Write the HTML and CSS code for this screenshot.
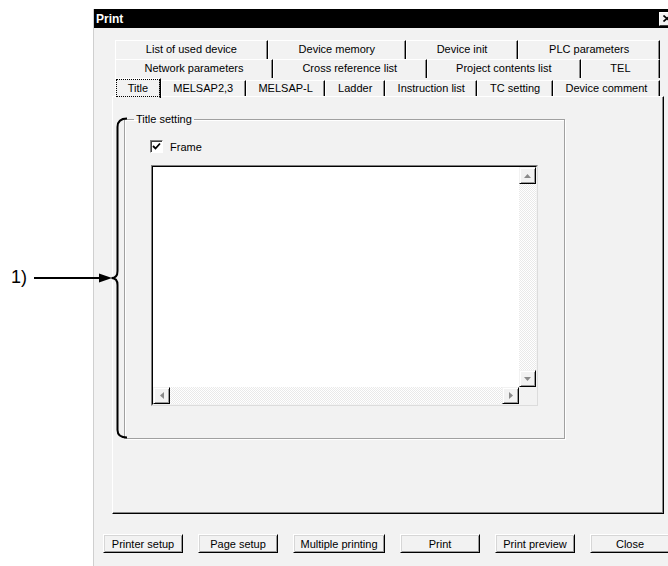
FILE: index.html
```html
<!DOCTYPE html>
<html lang="en">

<head>
    <meta charset="UTF-8">
    <title>Print</title>
    <link rel="stylesheet" href="styles.css">
</head>

<body>
<div class="sheet">
    <div class="callout">
        <span class="callout-label">1)</span>
        <svg class="callout-mark" width="140" height="566" viewBox="0 0 140 566">
            <line x1="34" y1="278" x2="102" y2="278" stroke="#000" stroke-width="2"/>
            <polygon points="99,273.5 112,278 99,282.5" fill="#000"/>
            <path d="M127 118.5 Q117.5 118.5 117.5 127 L117.5 271 Q117.5 278 111.5 278 Q117.5 278 117.5 285 L117.5 430 Q117.5 437.5 127 437.5"
                  fill="none" stroke="#000" stroke-width="2"/>
        </svg>
    </div>

    <div class="dialog">
        <div class="titlebar">
            <span class="title">Print</span>
            <span class="close-btn">
                <svg width="8" height="7" viewBox="0 0 8 7">
                    <path d="M0.5 0.5 L7.5 6.5 M7.5 0.5 L0.5 6.5" stroke="#000" stroke-width="1.6"/>
                </svg>
            </span>
        </div>

        <div class="tabctl">
            <div class="tab-row">
                <span class="tab">List of used device</span>
                <span class="tab">Device memory</span>
                <span class="tab">Device init</span>
                <span class="tab">PLC parameters</span>
            </div>
            <div class="tab-row">
                <span class="tab">Network parameters</span>
                <span class="tab">Cross reference list</span>
                <span class="tab">Project contents list</span>
                <span class="tab">TEL</span>
            </div>
            <div class="tab-row front">
                <span class="tab selected">Title</span>
                <span class="tab">MELSAP2,3</span>
                <span class="tab">MELSAP-L</span>
                <span class="tab">Ladder</span>
                <span class="tab">Instruction list</span>
                <span class="tab">TC setting</span>
                <span class="tab">Device comment</span>
            </div>

            <div class="tab-page">
                <fieldset class="group">
                    <legend>Title setting</legend>
                    <label class="check">
                        <span class="check-box">
                            <svg width="9" height="9" viewBox="0 0 9 9">
                                <path d="M1 4 L3.5 6.5 L8 1.5" fill="none" stroke="#000" stroke-width="1.8"/>
                            </svg>
                        </span>
                        Frame
                    </label>
                    <div class="editbox">
                        <div class="edit-inner">
                            <div class="edit-area"></div>
                            <div class="vscroll">
                                <span class="sbtn">
                                    <svg width="7" height="4" viewBox="0 0 7 4"><polygon points="3.5,0 7,4 0,4" fill="#8a8a8a"/></svg>
                                </span>
                                <span class="track"></span>
                                <span class="sbtn">
                                    <svg width="7" height="4" viewBox="0 0 7 4"><polygon points="0,0 7,0 3.5,4" fill="#8a8a8a"/></svg>
                                </span>
                            </div>
                            <div class="hscroll">
                                <span class="sbtn">
                                    <svg width="4" height="7" viewBox="0 0 4 7"><polygon points="4,0 4,7 0,3.5" fill="#8a8a8a"/></svg>
                                </span>
                                <span class="track"></span>
                                <span class="sbtn">
                                    <svg width="4" height="7" viewBox="0 0 4 7"><polygon points="0,0 4,3.5 0,7" fill="#8a8a8a"/></svg>
                                </span>
                            </div>
                            <div class="corner"></div>
                        </div>
                    </div>
                </fieldset>
            </div>
        </div>

        <div class="buttons">
            <button class="btn">Printer setup</button>
            <button class="btn">Page setup</button>
            <button class="btn btn-wide">Multiple printing</button>
            <button class="btn">Print</button>
            <button class="btn">Print preview</button>
            <button class="btn">Close</button>
        </div>
    </div>
</div>
</body>

</html>
```

FILE: styles.css
```css
body {
    font-family: 'Liberation Sans', Arial, sans-serif;
    font-size: 11px;
    margin: 0;
    background: #fff;
    color: #000;
    overflow: hidden;
}

.sheet {
    position: relative;
    height: 566px;
    padding-top: 9px;
    box-sizing: border-box;
}

/* annotation drawn over the dialog */
.callout {
    position: absolute;
    left: 0;
    top: 0;
    z-index: 5;
    pointer-events: none;
}

.callout-label {
    position: absolute;
    left: 11px;
    top: 268px;
    font-size: 18px;
    line-height: 18px;
}

.callout-mark {
    display: block;
}

.dialog {
    margin-left: 93px;
    width: 584px;
    height: 557px;
    border-left: 1px solid #cfcfcf;
    background: #f2f2f2;
    box-sizing: border-box;
}

.titlebar {
    height: 19px;
    background: #000;
    display: flex;
    align-items: center;
    justify-content: space-between;
    padding: 0 2px 0 2px;
}

.title {
    color: #fff;
    font-weight: bold;
    font-size: 12px;
}

.close-btn {
    width: 16px;
    height: 14px;
    box-sizing: border-box;
    background: #f2f2f2;
    border: 1px solid;
    border-color: #fff #404040 #404040 #fff;
    display: flex;
    align-items: center;
    justify-content: center;
}

.tabctl {
    margin-left: 18px;
    padding-top: 12px;
    width: 552px;
}

.tab-row {
    display: flex;
    height: 19px;
    width: 545px;
    margin-left: 3px;
}

.tab-row.front {
    height: 18px;
}

.tab {
    flex: 1 1 auto;
    text-align: center;
    white-space: nowrap;
    line-height: 17px;
    border-top: 1px solid #fff;
    border-left: 1px solid #fff;
    border-right: 1px solid #000;
    box-shadow: inset -1px 0 #8a8a8a;
    background: #f2f2f2;
}

.front .tab {
    margin-top: 2px;
    line-height: 15px;
}

.front .tab.selected {
    margin-top: 0;
    line-height: 18px;
    height: 19px;
    position: relative;
    z-index: 1;
    outline: 1px dotted #000;
    outline-offset: -2px;
}

.tab-page {
    height: 418px;
    box-sizing: border-box;
    border-top: 1px solid #fff;
    border-left: 1px solid #fff;
    border-right: 1px solid #000;
    border-bottom: 1px solid #000;
    box-shadow: inset -1px -1px #8a8a8a;
    padding: 16px 0 0 11px;
}

.group {
    width: 441px;
    height: 326px;
    box-sizing: border-box;
    margin: 0;
    padding: 0;
    border: 1px solid #a0a0a0;
    box-shadow: inset 1px 1px #fff, 1px 1px #fff;
}

.group legend {
    margin-left: 9px;
    padding: 0 2px;
    line-height: 13px;
}

.check {
    display: flex;
    align-items: center;
    gap: 7px;
    margin: 14px 0 0 25px;
    height: 13px;
}

.check-box {
    width: 13px;
    height: 13px;
    box-sizing: border-box;
    background: #fff;
    border: 1px solid;
    border-color: #808080 #fff #fff #808080;
    box-shadow: inset 1px 1px #404040;
    display: flex;
    align-items: center;
    justify-content: center;
}

.editbox {
    margin: 12px 0 0 26px;
    width: 387px;
    height: 241px;
    box-sizing: border-box;
    border: 1px solid;
    border-color: #808080 #dcdcdc #dcdcdc #808080;
}

.edit-inner {
    height: 100%;
    box-sizing: border-box;
    border: 1px solid;
    border-color: #000 #f2f2f2 #f2f2f2 #000;
    display: grid;
    grid-template-columns: 1fr 17px;
    grid-template-rows: 1fr 17px;
}

.edit-area {
    background: #fff;
}

.vscroll {
    display: flex;
    flex-direction: column;
}

.hscroll {
    display: flex;
}

.track {
    flex: 1;
    background-color: #fff;
    background-image: conic-gradient(#e9e9e9 25%, transparent 0 50%, #e9e9e9 0 75%, transparent 0);
    background-size: 2px 2px;
}

.sbtn {
    width: 17px;
    height: 17px;
    flex: none;
    box-sizing: border-box;
    background: #f2f2f2;
    border: 1px solid;
    border-color: #f2f2f2 #000 #000 #f2f2f2;
    box-shadow: inset 1px 1px #fff, inset -1px -1px #9a9a9a;
    display: flex;
    align-items: center;
    justify-content: center;
}

.corner {
    background: #f2f2f2;
}

.buttons {
    display: flex;
    gap: 15px;
    margin: 20px 0 0 9px;
}

.btn {
    width: 80px;
    height: 19px;
    padding: 0;
    font-family: inherit;
    font-size: 11px;
    color: #000;
    background: #f2f2f2;
    border: 1px solid;
    border-color: #fff #000 #000 #fff;
    box-shadow: inset 1px 1px #d6d6d6, inset -1px -1px #9a9a9a;
}

.btn-wide {
    width: 92px;
}
```
